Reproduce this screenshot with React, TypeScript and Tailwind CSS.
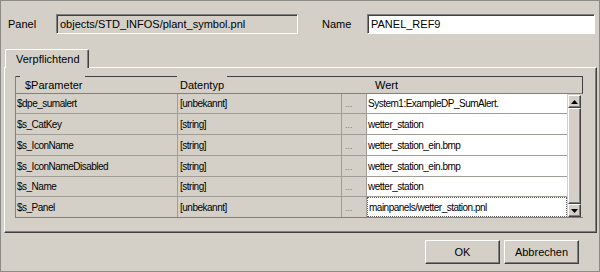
const rows = [
  { name: '$dpe_sumalert', type: '[unbekannt]', value: 'System1:ExampleDP_SumAlert.', h: 'h-[20px]' },
  { name: '$s_CatKey', type: '[string]', value: 'wetter_station', h: 'h-[21px]' },
  { name: '$s_IconName', type: '[string]', value: 'wetter_station_ein.bmp', h: 'h-[21px]' },
  { name: '$s_IconNameDisabled', type: '[string]', value: 'wetter_station_ein.bmp', h: 'h-[21px]' },
  { name: '$s_Name', type: '[string]', value: 'wetter_station', h: 'h-[20px]' },
  { name: '$s_Panel', type: '[unbekannt]', value: 'mainpanels/wetter_station.pnl', h: 'h-[20px]' },
];

const sunken =
  'border border-t-[#808080] border-l-[#808080] border-r-white border-b-white shadow-[inset_1px_1px_0_#404040]';
const raised =
  'border border-t-white border-l-white border-r-[#404040] border-b-[#404040] shadow-[inset_-1px_-1px_0_#808080]';

function Arrow({ up }: { up?: boolean }) {
  return (
    <div className={`w-[13px] h-[13px] bg-[#d4d0c8] ${raised} flex items-center justify-center`}>
      <svg width="7" height="4" viewBox="0 0 7 4">
        <path d={up ? 'M3.5 0 L7 4 L0 4 Z' : 'M0 0 L7 0 L3.5 4 Z'} fill="#000" />
      </svg>
    </div>
  );
}

export default function App() {
  return (
    <div className="w-[600px] h-[272px] bg-[#d4d0c8] border border-[#8c8a85] flex flex-col text-[11px] text-black font-['Liberation_Sans',Arial,sans-serif] overflow-hidden">
      {/* Panel / Name */}
      <div className="flex items-center h-[20px] mt-[13px] pl-[7px]">
        <span className="w-[48px]">Panel</span>
        <div className={`w-[242px] h-[20px] bg-[#d4d0c8] ${sunken} flex items-center pl-[3px]`}>
          objects/STD_INFOS/plant_symbol.pnl
        </div>
        <span className="ml-[24px] w-[45px]">Name</span>
        <div className={`w-[228px] h-[20px] bg-white ${sunken} flex items-center pl-[3px]`}>
          PANEL_REF9
        </div>
      </div>

      {/* Tab */}
      <div className="mt-[15px] ml-[4px] flex">
        <div className="relative z-10 -mb-[1px] w-[84px] h-[19px] bg-[#d4d0c8] border-l border-t border-r border-l-white border-t-white border-r-[#404040] rounded-t-[2px] shadow-[inset_-1px_0_0_#808080] flex items-center pl-[10px]">
          Verpflichtend
        </div>
      </div>

      {/* Tab panel */}
      <div className="ml-[3px] w-[593px] h-[166px] border border-l-white border-t-white border-r-[#404040] border-b-[#404040] shadow-[inset_-1px_-1px_0_#808080] pl-[10px] pt-[8px]">
        <div className="w-[568px] border-l border-[#808080]">
          {/* broken header top line */}
          <div className="flex h-[1px]">
            <div className="w-[4px] bg-[#404040]" />
            <div className="w-[65px]" />
            <div className="w-[92px] bg-[#404040]" />
            <div className="w-[50px]" />
            <div className="flex-1 bg-[#404040]" />
          </div>
          {/* header */}
          <div className="flex h-[17px] border-b border-r border-b-[#808080] border-r-[#404040] text-[11px]">
            <div className="w-[162px] pl-[9px] flex items-center">$Parameter</div>
            <div className="w-[164px] pl-[2px] flex items-center">Datentyp</div>
            <div className="flex-1 pl-[33px] flex items-center">Wert</div>
          </div>
          {/* body */}
          <div className="flex border-b border-[#808080]">
            <div className="w-[551px] text-[10px] tracking-[-0.5px]">
              {rows.map((r, i) => {
                const last = i === rows.length - 1;
                return (
                  <div key={r.name} className={`flex ${r.h} ${last ? '' : 'border-b border-[#a09d96]'}`}>
                    <div className="w-[162px] border-r border-[#a09d96] pl-[1px] flex items-center">{r.name}</div>
                    <div className="w-[164px] border-r border-[#a09d96] pl-[2px] flex items-center">{r.type}</div>
                    <div className="w-[25px] border-r border-[#a09d96] pl-[3px] flex items-center pt-[3px] text-[9px] tracking-normal text-[#7a7a7a]">
                      ...
                    </div>
                    <div className="flex-1 bg-white flex">
                      <div className={`flex-1 flex items-center pl-[1px] ${last ? 'border border-dotted border-[#606060]' : ''}`}>
                        {r.value}
                      </div>
                    </div>
                  </div>
                );
              })}
            </div>
            {/* scrollbar */}
            <div className="w-[16px] flex flex-col pl-[1px] pt-[1px] bg-[#d4d0c8]">
              <Arrow up />
              <div className={`w-[13px] flex-1 bg-[#d4d0c8] ${raised}`} />
              <Arrow />
            </div>
          </div>
        </div>
      </div>

      {/* Buttons */}
      <div className="flex justify-end gap-[4px] mt-[7px] pr-[20px]">
        <button className={`w-[75px] h-[24px] bg-[#d4d0c8] ${raised} text-[11px]`}>OK</button>
        <button className={`w-[75px] h-[24px] bg-[#d4d0c8] ${raised} text-[11px]`}>Abbrechen</button>
      </div>
    </div>
  );
}
